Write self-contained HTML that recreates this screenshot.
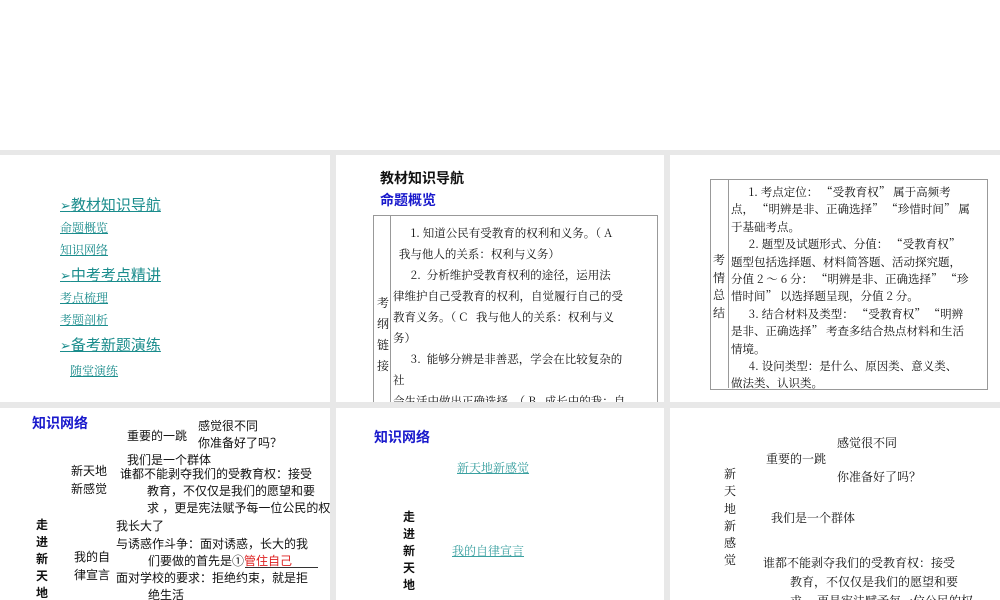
<!DOCTYPE html>
<html><head><meta charset="utf-8"><style>
body{margin:0;width:1000px;height:600px;overflow:hidden;background:#e8e8e8;position:relative;font-family:"Liberation Serif","Noto Serif CJK SC","Noto Sans CJK SC",serif;color:#111}
.s{position:absolute;background:#fff;overflow:hidden}
.a{position:absolute;white-space:nowrap;line-height:1}
.t{color:#1a8c8c;text-decoration:underline}
.b{font-family:"Liberation Sans","Noto Sans CJK SC",sans-serif;font-weight:bold}
.bl{color:#1a1acc}
.cj{font-family:"Noto Serif CJK SC","Liberation Serif",serif}
</style></head><body>
<div class="s" style="left:0;top:0;width:1000px;height:150px"></div>

<div class="s" style="left:0;top:155px;width:330px;height:247px">
<div class="a t b" style="left:60px;top:43px;font-size:15px;font-weight:normal"><span style="font-size:13px">➢</span>教材知识导航</div>
<div class="a t" style="left:60px;top:67px;font-size:12px">命题概览</div>
<div class="a t" style="left:60px;top:89px;font-size:12px">知识网络</div>
<div class="a t b" style="left:60px;top:113px;font-size:15px;font-weight:normal"><span style="font-size:13px">➢</span>中考考点精讲</div>
<div class="a t" style="left:60px;top:137px;font-size:12px">考点梳理</div>
<div class="a t" style="left:60px;top:159px;font-size:12px">考题剖析</div>
<div class="a t b" style="left:60px;top:183px;font-size:15px;font-weight:normal"><span style="font-size:13px">➢</span>备考新题演练</div>
<div class="a t" style="left:70px;top:210px;font-size:12px">随堂演练</div>
</div>

<div class="s" style="left:336px;top:155px;width:328px;height:247px">
<div class="a b" style="left:44px;top:16px;font-size:14px">教材知识导航</div>
<div class="a b bl" style="left:44px;top:38px;font-size:14px">命题概览</div>
<div style="position:absolute;left:37px;top:60px;width:283px;height:200px;border:1px solid #999"></div>
<div style="position:absolute;left:54px;top:60px;width:1px;height:200px;background:#999"></div>
<div class="a cj" style="left:41px;top:137px;font-size:12px;line-height:21px;white-space:normal;width:14px">考纲链接</div>
<div class="a cj" style="left:57px;top:68px;font-size:11.5px;line-height:21px">
&nbsp;&nbsp;&nbsp;&nbsp;&nbsp;&nbsp;1. 知道公民有受教育的权利和义务。（ A<br>
&nbsp;&nbsp;我与他人的关系：权利与义务）<br>
&nbsp;&nbsp;&nbsp;&nbsp;&nbsp;&nbsp;2.&nbsp; 分析维护受教育权利的途径，运用法<br>
律维护自己受教育的权利，自觉履行自己的受<br>
教育义务。（ C&nbsp;&nbsp; 我与他人的关系：权利与义<br>
务）<br>
&nbsp;&nbsp;&nbsp;&nbsp;&nbsp;&nbsp;3.&nbsp; 能够分辨是非善恶，学会在比较复杂的<br>
社<br>
会生活中做出正确选择。（ B&nbsp;&nbsp; 成长中的我：自</div>
</div>

<div class="s" style="left:670px;top:155px;width:330px;height:247px">
<div style="position:absolute;left:40px;top:24px;width:276px;height:209px;border:1px solid #999"></div>
<div style="position:absolute;left:58px;top:24px;width:1px;height:209px;background:#999"></div>
<div class="a cj" style="left:43px;top:96px;font-size:12px;line-height:17.5px;white-space:normal;width:14px">考情总结</div>
<div class="a cj" style="left:61px;top:29px;font-size:11.5px;line-height:17.4px">
&nbsp;&nbsp;&nbsp;&nbsp;&nbsp;&nbsp;1. 考点定位：&nbsp;“受教育权”&nbsp;属于高频考<br>
点，&nbsp;“明辨是非、正确选择”&nbsp;“珍惜时间”&nbsp;属<br>
于基础考点。<br>
&nbsp;&nbsp;&nbsp;&nbsp;&nbsp;&nbsp;2. 题型及试题形式、分值：&nbsp;“受教育权”<br>
题型包括选择题、材料简答题、活动探究题，<br>
分值 2 ～ 6 分：&nbsp;“明辨是非、正确选择”&nbsp;“珍<br>
惜时间”&nbsp;以选择题呈现，分值 2 分。<br>
&nbsp;&nbsp;&nbsp;&nbsp;&nbsp;&nbsp;3. 结合材料及类型：&nbsp;“受教育权”&nbsp;“明辨<br>
是非、正确选择”&nbsp;考查多结合热点材料和生活<br>
情境。<br>
&nbsp;&nbsp;&nbsp;&nbsp;&nbsp;&nbsp;4. 设问类型：是什么、原因类、意义类、<br>
做法类、认识类。</div>
</div>

<div class="s" style="left:0;top:408px;width:330px;height:192px;font-family:'Liberation Sans','Noto Sans CJK SC',sans-serif">
<div class="a b bl" style="left:32px;top:8px;font-size:14px">知识网络</div>
<div class="a" style="left:127px;top:22px;font-size:12px">重要的一跳</div>
<div class="a" style="left:198px;top:12px;font-size:12px">感觉很不同</div>
<div class="a" style="left:198px;top:29px;font-size:12px">你准备好了吗？</div>
<div class="a" style="left:127px;top:46px;font-size:12px">我们是一个群体</div>
<div class="a" style="left:71px;top:54px;font-size:12px;line-height:18px">新天地<br>新感觉</div>
<div class="a" style="left:120px;top:60px;font-size:12px">谁都不能剥夺我们的受教育权：接受</div>
<div class="a" style="left:147px;top:77px;font-size:12px">教育，不仅仅是我们的愿望和要</div>
<div class="a" style="left:147px;top:94px;font-size:12px">求 ，更是宪法赋予每一位公民的权</div>
<div class="a b" style="left:36px;top:109px;font-size:12px;line-height:17px;white-space:normal;width:14px">走进新天地</div>
<div class="a" style="left:116px;top:112px;font-size:12px">我长大了</div>
<div class="a" style="left:116px;top:130px;font-size:12px">与诱惑作斗争：面对诱惑，长大的我</div>
<div class="a" style="left:74px;top:140px;font-size:12px;line-height:18px">我的自<br>律宣言</div>
<div class="a" style="left:148px;top:147px;font-size:12px">们要做的首先是①<span style="color:#d22">管住自己</span></div>
<div style="position:absolute;left:245px;top:159px;width:73px;height:1px;background:#333"></div>
<div class="a" style="left:116px;top:164px;font-size:12px">面对学校的要求：拒绝约束，就是拒</div>
<div class="a" style="left:148px;top:181px;font-size:12px">绝生活</div>
</div>

<div class="s" style="left:336px;top:408px;width:328px;height:192px">
<div class="a b bl" style="left:38px;top:22px;font-size:14px">知识网络</div>
<div class="a t" style="left:121px;top:54px;font-size:12px;color:#3aa0a0">新天地新感觉</div>
<div class="a t" style="left:116px;top:137px;font-size:12px;color:#3aa0a0">我的自律宣言</div>
<div class="a b" style="left:67px;top:101px;font-size:12px;line-height:17px;white-space:normal;width:14px">走进新天地</div>
</div>

<div class="s" style="left:670px;top:408px;width:330px;height:192px">
<div class="a" style="left:167px;top:29px;font-size:12px">感觉很不同</div>
<div class="a" style="left:96px;top:45px;font-size:12px">重要的一跳</div>
<div class="a" style="left:167px;top:63px;font-size:12px">你准备好了吗？</div>
<div class="a" style="left:54px;top:58px;font-size:12px;line-height:17.3px;white-space:normal;width:14px">新天地新感觉</div>
<div class="a" style="left:101px;top:104px;font-size:12px">我们是一个群体</div>
<div class="a" style="left:93px;top:149px;font-size:12px">谁都不能剥夺我们的受教育权：接受</div>
<div class="a" style="left:120px;top:168px;font-size:12px">教育，不仅仅是我们的愿望和要</div>
<div class="a" style="left:120px;top:187px;font-size:12px">求 ，更是宪法赋予每一位公民的权</div>
</div>
</body></html>
